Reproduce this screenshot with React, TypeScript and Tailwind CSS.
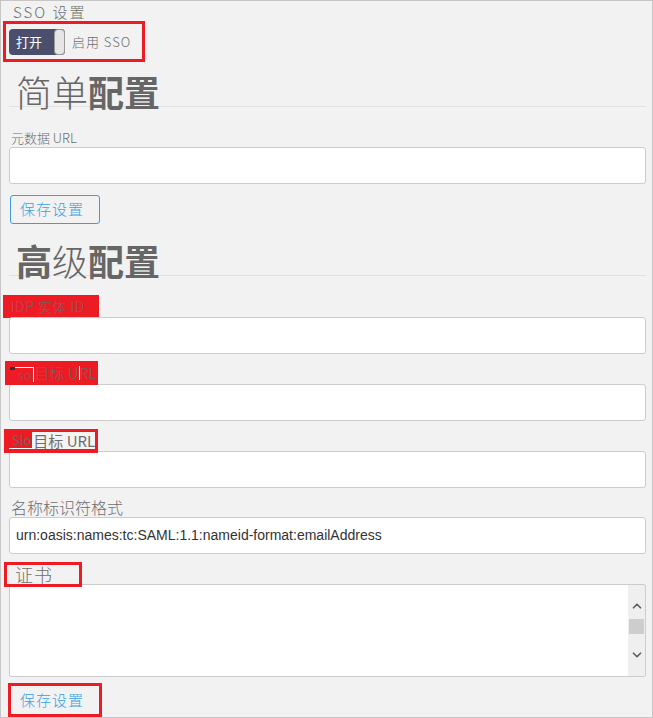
import { ChevronUp, ChevronDown } from 'lucide-react';

const CJK = { fontFamily: '"Noto Sans CJK SC", "Noto Sans", sans-serif' };

function TextInput({ value }: { value?: string }) {
  return (
    <div className="h-[37px] bg-white border border-[#cccccc] rounded-[3px] flex items-center pl-[6px]">
      {value && (
        <span
          className="text-[14px] text-[#333333]"
          style={{ fontFamily: '"Liberation Sans", Arial, sans-serif' }}
        >
          {value}
        </span>
      )}
    </div>
  );
}

function Heading({ parts, className }: { parts: { t: string; bold: boolean }[]; className: string }) {
  return (
    <div className={`h-[36px] border-b border-[#e2e2e2] pl-[7px] text-[36px] leading-[40px] text-[#666666] whitespace-nowrap ${className}`}>
      {parts.map((p, i) => (
        <span key={i} className={p.bold ? 'font-semibold' : 'font-extralight'}>
          {p.t}
        </span>
      ))}
    </div>
  );
}

export default function App() {
  return (
    <div
      className="w-[653px] h-[718px] border border-[#c6c6c6] bg-[#f2f2f2] pl-2 pr-[6px] overflow-hidden text-[#6e6e6e]"
      style={CJK}
    >
      {/* ── SSO 设置 ── */}
      <div className="h-[20px] mt-[1px] pl-[4px] text-[15px] leading-[20px] tracking-[2px] font-light">
        SSO 设置
      </div>

      <div className="relative h-[26px] mt-[7px] flex items-center gap-[7px]">
        <div className="relative w-[56px] h-[26px] rounded-[4px] bg-[#4b4f6c] flex items-center pl-[7px]">
          <span className="text-white text-[13px]">打开</span>
          <span className="absolute right-0 top-0 w-[11px] h-[26px] rounded-[4px] bg-[#e6e6e6] border border-[#9a9a9a]" />
        </div>
        <span className="text-[13px] tracking-[1px] font-light">启用 SSO</span>
        <div className="pointer-events-none absolute -left-[6px] -top-[8px] w-[142px] h-[41px] border-[3px] border-[#ed1c24]" />
      </div>

      {/* ── 简单配置 ── */}
      <Heading
        className="mt-[16px]"
        parts={[
          { t: '简单', bold: false },
          { t: '配置', bold: true },
        ]}
      />

      <div className="h-[18px] mt-[22px] pl-[2px] text-[13px] leading-[18px] font-light">元数据 URL</div>
      <TextInput />

      <button className="mt-[11px] ml-[1px] w-[90px] h-[29px] border border-[#3a9de0] rounded-[3px] bg-transparent text-[#3a9fe0] text-[15px] tracking-[1px] font-light text-left pl-[9px]">
        保存设置
      </button>

      {/* ── 高级配置 ── */}
      <Heading
        className="mt-[16px]"
        parts={[
          { t: '高', bold: true },
          { t: '级', bold: false },
          { t: '配置', bold: true },
        ]}
      />

      {/* IDP 实体 ID */}
      <div className="h-[22px] mt-[19px] -ml-[6px]">
        <div className="w-[96px] h-[23px] bg-[#ed1c24] pl-[8px] text-[14px] leading-[23px] text-[#7a6060] font-light tracking-[0.5px]">
          IDP 实体 ID
        </div>
      </div>
      <TextInput />

      {/* Sso 目标 URL */}
      <div className="h-[23px] mt-[7px] -ml-[4px] relative z-10">
        <div className="relative w-[93px] h-[24px] bg-[#ed1c24] flex items-center pl-[5px] text-[13px] text-[#7a6060] font-light whitespace-nowrap">
          <span className="relative inline-block border-t border-r border-white pl-[8px] pr-[1px] leading-[14px] mt-[3px]">
            <span className="absolute left-0 -top-[1px] w-[5px] h-[3px] bg-[#333333]" />
            so
          </span>
          <span className="ml-[1px] text-[15px]">目标 U</span>
          <span className="w-px h-[14px] bg-white" />
          <span className="text-[15px]">RL</span>
        </div>
      </div>
      <TextInput />

      {/* Slo 目标 URL */}
      <div className="h-[22px] mt-[8px] -ml-[5px] relative z-10">
        <div className="w-[94px] h-[24px] bg-[#ed1c24] flex items-stretch pt-[3px] pb-[4px] pl-[5px] pr-[4px] text-[13px] text-[#7a6060] whitespace-nowrap">
          <span className="border-b border-white pl-[3px] pr-[1px] leading-[16px]">Slo</span>
          <span className="flex-1 bg-[#f4f4f4] text-[15px] leading-[17px] pl-[1px] text-[#6e6e6e]">目标 URL</span>
        </div>
      </div>
      <TextInput />

      {/* 名称标识符格式 */}
      <div className="h-[20px] mt-[9px] pl-[2px] text-[16px] leading-[20px] font-light">名称标识符格式</div>
      <TextInput value="urn:oasis:names:tc:SAML:1.1:nameid-format:emailAddress" />

      {/* 证书 */}
      <div className="h-[22px] mt-[8px] -ml-[5px] relative z-10">
        <div className="w-[78px] h-[25px] border-[3px] border-[#ed1c24] bg-[#f2f2f2] pl-[8px] text-[18px] leading-[18px] font-extralight tracking-[1px]">
          证书
        </div>
      </div>
      <div className="h-[93px] bg-white border border-[#cccccc] rounded-[2px] flex justify-end">
        <div className="w-[17px] h-full bg-[#efefef] flex flex-col items-center justify-between py-[14px]">
          <ChevronUp size={14} strokeWidth={3} className="text-[#606060]" />
          <div className="w-[15px] h-[15px] bg-[#cdcdcd] -mt-[8px]" />
          <ChevronDown size={14} strokeWidth={3} className="text-[#606060]" />
        </div>
      </div>

      <div className="mt-[6px] -ml-[1px] w-[94px] h-[34px] border-[3px] border-[#ed1c24] text-[#3a9fe0] text-[15px] leading-[28px] tracking-[1px] font-light pl-[9px]">
        保存设置
      </div>
    </div>
  );
}
